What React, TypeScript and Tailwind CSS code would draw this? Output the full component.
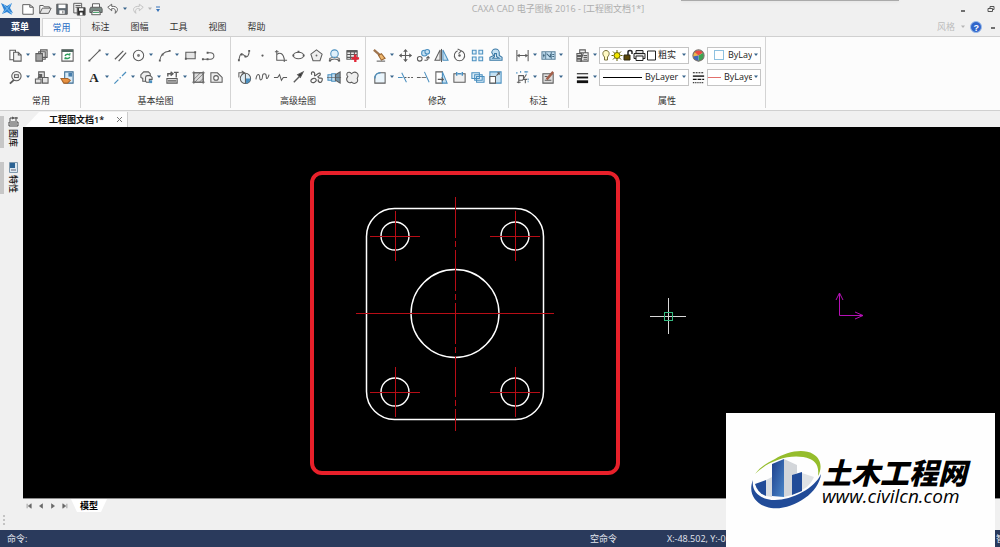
import { Fragment } from "react";
import type { ReactNode } from "react";

type Tool = { name: string; icon: ReactNode; menu?: boolean };

const DARK = "#5c5c5c";
const BLUE = "#4a8fbf";
const PALE = "#c4e0f2";

function Icon({ children, size = 15 }: { children: ReactNode; size?: number }) {
  return (
    <svg width={size} height={size} viewBox="0 0 16 16" fill="none" stroke={DARK} strokeWidth="1.1" aria-hidden="true">
      {children}
    </svg>
  );
}

function Caret({ light = false }: { light?: boolean }) {
  return (
    <svg width="8" height="4" viewBox="0 0 8 4" className="shrink-0" aria-hidden="true">
      <path d="M2 0.5h4L4 3z" fill={light ? "#b5b5b5" : "#39658c"} />
    </svg>
  );
}

const quickTools: Tool[] = [
  { name: "新建", icon: <path d="M2 3h8l4 3v8H2zM10 3v3h4" fill="#fff" /> },
  { name: "打开", icon: <><path d="M2 13V4h4l1 1.500h6V7" fill="#fff" /><path d="M2 13l3-6h10l-3 6z" fill="#e6e6e6" /></> },
  { name: "保存", icon: <><path d="M2 2.500h12v11.500H2z" fill="#606a72" /><path d="M4 3h8v4H4z" fill="#fff" stroke="none" /><path d="M5 9.500h6v4H5z" fill="#fff" stroke="none" /><path d="M9 10v3" /></> },
  { name: "另存为", icon: <><path d="M2 1.500h9v11H2zM4 4h6M4 6h5" fill="#eee" /><path d="M6 6.500h9V15H6z" fill="#333" /><path d="M8 7h5v3H8zM9 12h3v3H9z" fill="#fff" stroke="none" /></> },
  { name: "打印", icon: <><path d="M4 6V2h8v4" fill="#fff" /><path d="M2 6h12l1 2v4H1V8z" fill="#7b8b85" /><path d="M4 10h8l1 4.500H3z" fill="#fff" /><path d="M4.500 12h7" stroke="#4aa46d" /></> },
  { name: "撤销", icon: <path d="M6.500 2.500L2 6l4.500 4V7.500c3-.500 5 .500 4 5.500 4.500-4 3-8.500-4-8z" fill="#fff" />, menu: true },
  { name: "恢复", icon: <path d="M9.500 2.500L14 6l-4.500 4V7.500c-3-.500-5 .500-4 5.500-4.500-4-3-8.500 4-8z" stroke="#c2c2c2" />, menu: true },
];

const commonTop: Tool[] = [
  { name: "复制", menu: true, icon: <><path d="M2 2.500h6v10H2z" fill="#fff" /><path d="M6 4.500h5l3 3V14H6z" fill="#f1f1f1" /><path d="M11 4.500v3h3" /></> },
  { name: "粘贴", menu: true, icon: <><path d="M7 2h7v8H7zM5 4h7v8H5z" fill="#ddd" /><path d="M2 6h7v8H2z" fill="#a5a5a5" /></> },
  { name: "刷新", icon: <><path d="M2 2h12v12H2z" fill="#fff" /><path d="M2 3h12" strokeWidth="2.500" stroke="#4e6860" /><path d="M5.500 8.500c.5-2 4-2.500 5-.5M10.500 7v-1.500M5.500 10v2M10.500 9.500c-.5 2-4 2.500-5 .5" stroke="#2d9d5c" strokeWidth="1.600" /></> },
];
const commonBottom: Tool[] = [
  { name: "显示窗口", menu: true, icon: <><path d="M7 10L2 14.500" strokeWidth="2" /><circle cx="9" cy="6.500" r="5" fill="#f1f1f1" /><path d="M7 5h4v3H7z" /></> },
  { name: "块", menu: true, icon: <><path d="M5 2h6v6H5zM9 8h6v6H9zM1.500 9.500h6V14h-6z" fill="#e3e3e3" /><path d="M4 9l4-4M8 8V5H5" strokeWidth="1.500" /></> },
  { name: "特性匹配", icon: <><path d="M5 2h9v12H5z" fill="#d8eaf6" stroke="#386a91" /><path d="M9 3h4v4H9z" fill="#477eac" stroke="none" /><path d="M1 9h7l3 2-3 3H4z" fill="#e99241" stroke="#a7642b" /></> },
];

const basicTop: Tool[] = [
  { name: "直线", menu: true, icon: <><path d="M2.500 13.500L13.500 2.500" /><path d="M1.500 12.500h2v2h-2zM12.500 1.500h2v2h-2z" fill={DARK} stroke="none" /></> },
  { name: "平行线", icon: <path d="M2 12L11 3M6 14L14 5" strokeWidth="1.300" /> },
  { name: "圆", menu: true, icon: <><circle cx="8" cy="8" r="5.500" /><circle cx="8" cy="8" r="1.500" fill="#777" stroke="none" /></> },
  { name: "圆弧", menu: true, icon: <><path d="M3 13C4 7 7 4 13 3.500" /><path d="M2 12.500h2v2H2zM12.500 2h2v2h-2zM5 6h2v2H5z" fill={DARK} stroke="none" /></> },
  { name: "矩形", icon: <><path d="M3 4.500h10v7H3z" fill="#e5e5e5" /><path d="M2 10.500h2v2H2zM12 3.500h2v2h-2z" fill={DARK} stroke="none" /></> },
  { name: "多段线", icon: <><path d="M2 12h8c5 0 5-7 0-7H7" /><path d="M1 11h2v2H1zM6 11h2v2H6zM6 4h2v2H6z" fill={DARK} stroke="none" /></> },
];
const basicBottom: Tool[] = [
  { name: "文字", menu: true, icon: <text x="2.500" y="13" fontSize="14" fontWeight="700" fontFamily="Liberation Serif, serif" fill="#222" stroke="none">A</text> },
  { name: "中心线", menu: true, icon: <path d="M1.500 14.500L14.500 1.500" stroke={BLUE} strokeDasharray="6 2 1.500 2" strokeWidth="1.300" /> },
  { name: "等距线", menu: true, icon: <><path d="M5 2h5l2 2v3H8v5H4V9L2 8V5z" fill="#eee" /><path d="M7 12V8c0-1 1-2 2-2h3l2 2v2h-3v3H8z" fill="#f7f7f7" /><path d="M11 11h3v3h-3z" fill={BLUE} stroke="none" /></> },
  { name: "图库", menu: true, icon: <><path d="M2 9h11v5H2z" fill="#ddd" /><path d="M3 11.500h9M3 7V4h4M6 2l2.500 2L6 6M12 2v6M9.500 2.500h5" strokeWidth="1.400" /></> },
  { name: "剖面线", icon: <><path d="M3 3h10v10H3z" fill="#ddd" /><path d="M3 10l7-7M4 13l9-9M9 13l4-4M3 1v14M13 1v14M1 3h14M1 13h14" strokeWidth=".7" /></> },
  { name: "填充", icon: <><path d="M2 3h7l5 5v5H2z" fill="#eee" /><circle cx="7.500" cy="8.500" r="2.500" fill="#fff" /></> },
];

const advancedTop: Tool[] = [
  { name: "样条", icon: <><path d="M2 13c2-12 5-5 7-4s4-1 4-6" /><path d="M1 12h2v2H1zM12 2h2v2h-2zM4 6h2v2H4zM8 8h2v2H8z" fill={DARK} stroke="none" /></> },
  { name: "点", icon: <circle cx="8" cy="8" r="1.200" fill={DARK} stroke="none" /> },
  { name: "公式曲线", icon: <path d="M4 2v11h11M2 4h4M12 11v4M4 7c4-3 7-1 8 5" /> },
  { name: "椭圆", icon: <><ellipse cx="8" cy="8" rx="5.500" ry="3.500" /><path d="M7 3h2v2H7zM1.500 7h2v2h-2zM12.500 7h2v2h-2z" fill={DARK} stroke="none" /></> },
  { name: "正多边形", icon: <><path d="M8 2l6 4.500-2.300 7H4.300L2 6.500z" fill="#eee" /><circle cx="8" cy="8" r="1" fill="#666" stroke="none" /></> },
  { name: "局部放大图", icon: <><circle cx="8" cy="6" r="4" stroke={BLUE} fill="#e0f0fa" /><path d="M3 14v-3l3-1M13 14v-3l-3-1M3 14c2-3 8-3 10 0" /><path d="M2 12.500h2v2H2zM12 12.500h2v2h-2z" fill={DARK} stroke="none" /></> },
  { name: "表格", icon: <><path d="M2 3h11v9H2zM2 7h11M2 10h11M6 3v9M10 3v9" fill="#eee" /><path d="M2 3.500h11" strokeWidth="2.500" /><path d="M11 7v8M7 11h8" stroke="#e32636" strokeWidth="2.500" /></> },
];
const advancedBottom: Tool[] = [
  { name: "圆弧拟合", icon: <><circle cx="9" cy="9" r="5.500" fill="#e0edf5" /><path d="M9 9h5.500A5.500 5.500 0 019 14.500z" fill={BLUE} stroke="none" /><path d="M2 8V3h5M5 1l3 2-3 2M9 4v10" /></> },
  { name: "波浪线", icon: <path d="M1 10c1-7 4-6 4-2s3 3 3-1 4-4 4 0 2 2 3-2" /> },
  { name: "双折线", icon: <path d="M1 8h4l2-3 2 6 2-3h4" /> },
  { name: "箭头", icon: <><path d="M3 13l6-6" strokeWidth="1.500" /><path d="M7 5l6-3-3 6z" fill="#333" /></> },
  { name: "齿形", icon: <path d="M3 5c-2-4 4-4 3 0S11 1 12 4s-4 2-2 4 5-1 4 3-5 2-4-1M5 9c-5 1-3 6 1 4s0-5-1-4z" strokeWidth="1.300" /> },
  { name: "孔/轴", icon: <><path d="M1 5h4v6H1zM5 4h4v8H5z" fill={PALE} stroke={BLUE} /><path d="M9 5l5-3v12l-5-3z" fill="#7494a8" /><path d="M0 8h15" strokeWidth=".7" /></> },
  { name: "云线", icon: <path d="M7 4c-3-4-7 0-4 3-3 3 0 8 4 6 3 3 8 0 6-4 3-5-2-9-6-5z" fill="#eee" /> },
];

const modifyTop: Tool[] = [
  { name: "删除", menu: true, icon: <><path d="M2 2l8 7" strokeWidth="2.500" stroke="#9e744e" /><path d="M7 8l3-2 4 5-4 2z" fill="#efb76e" stroke="#99642f" /><path d="M5 14h9" /></> },
  { name: "平移", icon: <><path d="M8 2v12M2 8h12" strokeWidth="1.200" /><path d="M8 1l2.500 3h-5zM8 15l2.500-3h-5zM1 8l3-2.500v5zM15 8l-3-2.500v5z" fill={DARK} stroke="none" /></> },
  { name: "平移复制", icon: <><circle cx="9" cy="5.500" r="3" stroke={BLUE} fill={PALE} /><circle cx="12" cy="4" r="2.500" stroke={BLUE} fill={PALE} /><circle cx="4" cy="11.500" r="2.500" /><path d="M9 13h2c2 0 2-1 2-3M11 11l2-2 1.500 2" /></> },
  { name: "镜像", icon: <><path d="M6.500 2v11H1z" fill="#eee" /><path d="M9.500 2v11H15z" fill={PALE} stroke={BLUE} /><path d="M8 1v14" /></> },
  { name: "旋转", icon: <><path d="M10 3a5.500 5.500 0 11-4 0M6 1l4 2-3 3" /><circle cx="8" cy="8" r="1.300" fill={DARK} stroke="none" /></> },
  { name: "阵列", icon: <path d="M2.500 2.500h4v4h-4zM9.500 2.500h4v4h-4zM2.500 9.500h4v4h-4zM9.500 9.500h4v4h-4z" fill="#dceef9" stroke={BLUE} /> },
  { name: "偏移", icon: <><path d="M2 13h13v-3l-3-2V5a4 4 0 00-8 0l2 3-4 2z" fill={PALE} stroke="#3b79a5" /><path d="M5 11h7l-3-2V6H7v3z" fill="#fff" stroke="#3b79a5" /></> },
];
const modifyBottom: Tool[] = [
  { name: "圆角", menu: true, icon: <><path d="M3 14V9c0-4 3-6 6-6h5v11z" fill="#eaf5fc" /><path d="M3 9c0-4 3-6 6-6" stroke={BLUE} strokeWidth="1.500" /></> },
  { name: "裁剪", icon: <><path d="M4 3l5 10M0 8h5" stroke={BLUE} /><path d="M7 8h9" strokeDasharray="2 1.500" /></> },
  { name: "延伸", icon: <><path d="M1 8h4" /><path d="M6 8h5" stroke="#777" /><path d="M9 2l5 11" stroke={BLUE} /></> },
  { name: "拉伸", icon: <><path d="M2 2h7v12H2z" fill="#fff" /><path d="M9 2l5 12H9z" fill={PALE} stroke={BLUE} /><path d="M4 10h6M8 8l2 2-2 2" /></> },
  { name: "打断", icon: <><path d="M5 4H2v9h12V4h-3" fill="#f0f0f0" /><path d="M5 2v4M11 2v4M6 4h4" stroke={BLUE} strokeWidth="1.500" /></> },
  { name: "分解", icon: <path d="M2 3h8v6H2zM5 5h8v6H5zM7 7h8v6H7z" fill="#dceef9" stroke={BLUE} /> },
  { name: "缩放", icon: <><path d="M2 2h12v12H2z" fill={PALE} stroke={BLUE} /><path d="M2 7h6v7H2z" fill="#fff" /><path d="M9 6l3-3M10 3h2v2" /></> },
];

const markTop: Tool[] = [
  { name: "尺寸标注", menu: true, icon: <><path d="M2 2v12M14 2v12M3 8h10" /><path d="M2 8l3-2v4zM14 8l-3-2v4z" fill={DARK} stroke="none" /></> },
  { name: "形位公差", menu: true, icon: <><path d="M1 4h14v8H1zM5 4v8M11 4v8" fill={PALE} stroke="#5c8199" /><path d="M2 8h2M3 6v4M6 6l4 4M10 6v4M12 7h2M12 9h2" stroke="#42677f" /></> },
];
const markBottom: Tool[] = [
  { name: "坐标标注", menu: true, icon: <><path d="M4 14V6h5v4h4M2 13h4M4 11h4l4-6M11 10v4" /><path d="M2 2v3M6 1v3M10 2h4M12 1v4M14 9v4" stroke={BLUE} strokeDasharray="2 1" /></> },
  { name: "标注编辑", menu: true, icon: <><path d="M2 4h11v10H2z" fill="#ddd" /><path d="M4 11h7M4 7h3" /><path d="M6 10l7-8" stroke="#a35f4a" strokeWidth="2.500" /></> },
];

const layerTool: Tool = { name: "图层", menu: true, icon: <><path d="M5 2h6v3H5zM9 5h5v9H6l2-6z" fill="#eee" /><path d="M2 6h5v2H2zM2 9h5v2H2zM2 12h5v2H2zM9 8h4M9 10h4M9 12h4" /></> };
const widthTool: Tool = { name: "线宽", menu: true, icon: <><path d="M2 4h12" stroke="#111" /><path d="M2 8h12" strokeWidth="2" stroke="#111" /><path d="M2 12.500h12" strokeWidth="3" stroke="#111" /></> };
const colorTool: Tool = { name: "颜色", icon: <g stroke="none"><path d="M8 8L3 5a6 6 0 0110 0z" fill="#e84d45" /><path d="M8 8l5-3a6 6 0 01-5 9z" fill="#3da451" /><path d="M8 8v6A6 6 0 013 5z" fill="#3f68be" /><path d="M8 8L2 9a6 6 0 011.500-5z" fill="#edb44b" /><circle cx="8" cy="8" r="6" stroke="#756c66" fill="none" /></g> };
const lineTool: Tool = { name: "线型", icon: <><path d="M2 3h12" strokeDasharray="2 1" stroke="#111" /><path d="M2 6.500h12" stroke="#111" strokeWidth="1.500" /><path d="M2 10h12" strokeDasharray="4 1" stroke="#111" strokeWidth="1.500" /><path d="M2 13.500h12" strokeDasharray="1 1" stroke="#111" strokeWidth="1.500" /></> };

function ToolButton({ tool }: { tool: Tool }) {
  return (
    <button type="button" aria-label={tool.name} className="flex h-[18px] shrink-0 items-center">
      <span className="flex w-[18px] justify-center">
        <Icon>{tool.icon}</Icon>
      </span>
      {tool.menu && <Caret />}
    </button>
  );
}

function Panel({ label, children }: { label: string; children: ReactNode }) {
  return (
    <section className="flex flex-col border-r border-[#d4d4d4] pt-[9px] pr-[4px] pl-[4px]">
      <div className="flex flex-col gap-1">{children}</div>
      <h2 className="mt-2 text-center leading-[14px]">{label}</h2>
    </section>
  );
}

function ToolRow({ tools }: { tools: Tool[] }) {
  return (
    <div className="flex h-[18px] items-center">
      {tools.map((tool) => (
        <ToolButton key={tool.name} tool={tool} />
      ))}
    </div>
  );
}

function Combo({ label, value, wide = false, children }: { label: string; value: string; wide?: boolean; children: ReactNode }) {
  return (
    <div className={`flex h-[17px] items-center border border-[#c4c4c4] bg-white ${wide ? "w-[90px]" : "w-[54px]"}`}>
      {children}
      <select aria-label={label} className="h-full min-w-0 flex-1 appearance-none overflow-hidden bg-transparent text-[9px] text-[#222] outline-none">
        <option>{value}</option>
      </select>
      <Caret />
    </div>
  );
}

const ribbonTabs = ["常用", "标注", "图幅", "工具", "视图", "帮助"];

function TitleBar() {
  return (
    <header className="relative flex h-[18px] items-center">
      <svg width="19" height="16" viewBox="0 0 19 16" className="shrink-0" aria-hidden="true">
        <path d="M1 2l6 3 5-3-2 5 3 5-3-1 2 3-5-3-5 2 2-4z" fill="#2f83d5" />
        <path d="M4 4l8 9M11 3L3 12" stroke="#74bbf0" strokeWidth="1" />
      </svg>
      {quickTools.map((tool) => (
        <button key={tool.name} type="button" aria-label={tool.name} className="flex shrink-0 items-center">
          <span className="flex w-[17px] justify-center">
            <Icon size={14}>{tool.icon}</Icon>
          </span>
          {tool.menu && <Caret light={tool.name === "恢复"} />}
        </button>
      ))}
      <button type="button" aria-label="自定义快速启动工具栏" className="flex w-[8px] justify-center">
        <svg width="6" height="7" viewBox="0 0 6 7" aria-hidden="true">
          <path d="M1 1h4" stroke="#3673b9" />
          <path d="M1 3h4L3 6z" fill="#3673b9" />
        </svg>
      </button>
      <h1 className="flex-1 text-center text-[#adadad]">CAXA CAD 电子图板 2016 - [工程图文档1*]</h1>
      <div className="flex w-[46px] justify-between">
        <button type="button" aria-label="最小化" className="flex w-[18px] justify-center">
          <svg width="8" height="8" viewBox="0 0 8 8"><path d="M2 6h4" stroke="#444" strokeWidth="1.500" /></svg>
        </button>
        <button type="button" aria-label="还原" className="flex w-[18px] justify-center">
          <svg width="8" height="8" viewBox="0 0 8 8" fill="none" stroke="#555"><path d="M3 3V1.500h4v3H5.500M1 3.500h4.500v3H1z" /></svg>
        </button>
      </div>
      <div className="absolute top-0 right-[101px] h-px w-[218px] bg-[#aaa] shadow" />
    </header>
  );
}

function Ribbon() {
  return (
    <>
      <nav className="flex h-[18px] items-end">
        <button type="button" className="h-[18px] w-[40px] bg-[#2a3a5c] font-semibold text-white">菜单</button>
        <div className="ml-[2px] flex">
          {ribbonTabs.map((tab, i) => (
            <button
              key={tab}
              type="button"
              className={i === 0 ? "h-[18px] w-[39px] border-x border-t border-[#d4d4d4] bg-[#fcfcfc] text-[#2469c4]" : "h-[18px] w-[39px]"}
            >
              {tab}
            </button>
          ))}
        </div>
        <div className="ml-auto flex h-[18px] items-center">
          <button type="button" className="flex items-center gap-1 text-[#bcbcbc]">风格<Caret light /></button>
          <button type="button" aria-label="帮助主题" className="flex w-[18px] justify-center">
            <svg width="12" height="12" viewBox="0 0 12 12">
              <circle cx="6" cy="6" r="5.500" fill="#2f65ca" stroke="#9cbbe9" />
              <text x="3.500" y="9.500" fontSize="9" fontWeight="700" fontFamily="Liberation Sans, sans-serif" fill="#fff">?</text>
            </svg>
          </button>
          <button type="button" aria-label="最小化文档" className="flex w-[15px] justify-center">
            <svg width="8" height="8" viewBox="0 0 8 8"><path d="M2 5h4" stroke="#444" strokeWidth="1.500" /></svg>
          </button>
        </div>
      </nav>
      <div className="flex h-[75px] border-y border-[#d0d0d0] bg-[#fcfcfc] pb-[2px]">
        <div className="flex w-[81px] flex-col *:flex-1 *:pl-[6px]">
          <Panel label="常用"><ToolRow tools={commonTop} /><ToolRow tools={commonBottom} /></Panel>
        </div>
        <div className="flex w-[150px] flex-col *:flex-1">
          <Panel label="基本绘图"><ToolRow tools={basicTop} /><ToolRow tools={basicBottom} /></Panel>
        </div>
        <div className="flex w-[135px] flex-col *:flex-1">
          <Panel label="高级绘图"><ToolRow tools={advancedTop} /><ToolRow tools={advancedBottom} /></Panel>
        </div>
        <div className="flex w-[143px] flex-col *:flex-1">
          <Panel label="修改"><ToolRow tools={modifyTop} /><ToolRow tools={modifyBottom} /></Panel>
        </div>
        <div className="flex w-[60px] flex-col *:flex-1">
          <Panel label="标注"><ToolRow tools={markTop} /><ToolRow tools={markBottom} /></Panel>
        </div>
        <Panel label="属性">
          <div className="flex h-[18px] items-center">
            <ToolButton tool={layerTool} />
            <Combo label="当前图层" value="粗实" wide>
              <svg width="58" height="13" viewBox="0 0 58 13" fill="none" stroke="#222" className="shrink-0" aria-hidden="true">
                <path d="M4.500 8C1.500 5 3 1.500 6 1.500s4.500 3.500 1.500 6.500v3h-3z" fill="#fffac4" stroke="#77713c" />
                <circle cx="17" cy="6.500" r="3" fill="#f2e600" stroke="#625e00" />
                <path d="M17 1v2M17 10v2M11.500 6.500h2M20.500 6.500h2M13 2.500l1.500 1.500M19.500 9l1.500 1.500M21 2.500L19.500 4M14.500 9L13 10.500" stroke="#625e00" />
                <path d="M24 6h6v5h-6z" fill="#5c4908" stroke="#2f2810" />
                <path d="M28 6V3c0-2 4-2 4 0v2" strokeWidth="1.500" />
                <path d="M36 4V1.500h7V4M34 4.500h11v5H34z" fill="#ddd" />
                <path d="M36 7h7v4.500h-7z" fill="#fff" />
                <path d="M47.500 2h8v9h-8z" fill="#fff" />
              </svg>
            </Combo>
            <ToolButton tool={colorTool} />
            <Combo label="当前颜色" value="ByLayer">
              <span className="mr-1 ml-[6px] size-[10px] shrink-0 border border-[#8fc1e0]" />
            </Combo>
          </div>
          <div className="flex h-[18px] items-center">
            <ToolButton tool={widthTool} />
            <Combo label="当前线宽" value="ByLayer" wide>
              <span className="mr-[3px] ml-[3px] h-px w-[39px] shrink-0 bg-black" />
            </Combo>
            <ToolButton tool={lineTool} />
            <Combo label="当前线型" value="ByLayer">
              <span className="mr-[3px] h-px w-[13px] shrink-0 bg-[#e2706c]" />
            </Combo>
          </div>
        </Panel>
      </div>
    </>
  );
}

// hole centres of the flange plate
const holes = [[395, 236], [515, 236], [395, 392], [515, 392]];

function Drawing() {
  return (
    <svg viewBox="23 127 977 370" preserveAspectRatio="xMinYMin meet" className="min-h-0 min-w-0 flex-1" fill="none" role="img" aria-label="法兰板">
      <rect x="312" y="173" width="306" height="300" rx="10" stroke="#e8202a" strokeWidth="4" />
      <rect x="366.500" y="208.500" width="177" height="211" rx="28" stroke="#fff" strokeWidth="1.500" />
      <circle cx="455" cy="313.500" r="44" stroke="#fff" strokeWidth="1.400" />
      {holes.map(([x, y]) => (
        <Fragment key={`${x}-${y}`}>
          <circle cx={x} cy={y} r="14" stroke="#fff" strokeWidth="1.400" />
          <path d={`M${x - 25} ${y + 0.5}h50M${x + 0.5} ${y - 25}v50`} stroke="#b80d16" />
        </Fragment>
      ))}
      <path d="M356 313.500h198" stroke="#b80d16" />
      <path d="M455.500 197v234" stroke="#b80d16" strokeDasharray="41 3 6 3" />
      <path d="M650 316.500h36M668.500 298v36" stroke="#d8d8d8" />
      <rect x="664.500" y="312.500" width="8" height="8" stroke="#35ba80" />
      <path d="M839.500 293v22.500H863M836 300l3.500-7 3.500 7M855 312l8 3.500-8 3.500" stroke="#b510b5" />
    </svg>
  );
}

function SideDock() {
  return (
    <aside className="flex w-[23px] flex-col gap-[14px] pt-[5px] font-medium text-[#111]">
      <button type="button" className="flex h-[32px] items-start border-l-4 border-[#c7c7c7] pl-[4px]">
        <span className="flex w-[11px] flex-col items-center gap-[2px]">
          <svg width="11" height="11" viewBox="0 0 11 11" fill="none" stroke="#444" aria-hidden="true"><path d="M1 6h9v4H1zM2 8h7M2 5V2h3M4 1l2 1-2 1M8 1v4M6 2h4" /></svg>
          <span className="leading-[11px] [text-orientation:sideways] [writing-mode:vertical-rl]">图库</span>
        </span>
      </button>
      <button type="button" className="flex h-[32px] items-start border-l-4 border-[#c7c7c7] pl-[4px]">
        <span className="flex w-[11px] flex-col items-center gap-[2px]">
          <svg width="11" height="11" viewBox="0 0 11 11" aria-hidden="true"><path d="M1.500.5h8v10h-8z" fill="#dce8f1" stroke="#7f99ad" /><path d="M2 1h5v5H2z" fill="#2b6394" /><path d="M3 8h5" stroke="#667" /></svg>
          <span className="leading-[11px] [text-orientation:sideways] [writing-mode:vertical-rl]">特性</span>
        </span>
      </button>
    </aside>
  );
}

const sheetButtons = [
  { name: "第一个", d: "M1.500 1v6M7 1v6L3 4z" },
  { name: "上一个", d: "M6 1v6L2 4z" },
  { name: "下一个", d: "M2 1v6l4-3z" },
  { name: "最后一个", d: "M6.500 1v6M1 1v6l4-3z" },
];

function Workspace() {
  return (
    <main className="flex min-h-0 flex-1">
      <SideDock />
      <div className="flex min-w-0 flex-1 flex-col">
        <div className="flex h-[16px] items-end">
          <div className="ml-[2px] flex h-[15px] w-[103px] items-center justify-between border-r border-[#ccc] bg-[#fdfdfd] pr-1 pl-6 [clip-path:polygon(14px_0,100%_0,100%_100%,0_100%)]">
            <span className="font-semibold text-[#111]">工程图文档1*</span>
            <button type="button" aria-label="关闭文档">
              <svg width="7" height="7" viewBox="0 0 7 7" stroke="#777"><path d="M1 1l5 5M6 1L1 6" /></svg>
            </button>
          </div>
        </div>
        <div className="flex min-h-0 flex-1 border-b border-[#8c8c8c] bg-black">
          <Drawing />
        </div>
        <div className="flex h-[13px] items-center">
          {sheetButtons.map((b) => (
            <button key={b.name} type="button" aria-label={b.name} className="flex w-[12px] justify-center">
              <svg width="6" height="6" viewBox="0 0 8 8" fill="#666" stroke="#666" strokeWidth=".8"><path d={b.d} /></svg>
            </button>
          ))}
          <button type="button" className="h-[13px] w-[36px] bg-white font-bold text-black [clip-path:polygon(0_0,100%_0,calc(100%-6px)_100%,6px_100%)]">模型</button>
        </div>
      </div>
    </main>
  );
}

function Watermark() {
  return (
    <div className="absolute right-[5px] bottom-0 flex h-[134px] w-[269px] items-start bg-[#fefefe] pt-[36px] pl-[24px]">
      <svg width="72" height="62" viewBox="750 449 72 62" className="shrink-0" aria-hidden="true">
        <defs>
          <linearGradient id="tower" x1="0" y1="0" x2="1" y2="1">
            <stop offset="0" stopColor="#1d3f8c" />
            <stop offset="1" stopColor="#4a86c8" />
          </linearGradient>
        </defs>
        <path d="M755 474c7-9 13-11 20-15 11-7 28-11 38-5 9 5 9 15 5 22 1-8-1-14-8-17-18-7-42 2-55 15z" fill="#95bd2c" />
        <path d="M753 480c-6 14 4 26 18 28 20 3 48-14 50-34-6 14-29 26-46 26-14 0-24-8-22-20z" fill="#214b98" />
        <path d="M755 484l11-4v16c-6-2-9-6-11-12z" fill="#214b98" />
        <path d="M766 480l6-3v20l-6-1z" fill="#d9dde2" />
        <path d="M772 464l12-5v38l-12-1z" fill="url(#tower)" />
        <path d="M784 459l13 6v8l-5 3v19l-8 2z" fill="#d3d6da" />
        <path d="M792 475l10-3v19l-10 4z" fill="#214b98" />
        <path d="M802 473l12 4c-2 5-6 10-12 13z" fill="#dfe2e5" />
      </svg>
      <div className="flex flex-col whitespace-nowrap text-black italic">
        <span className="pt-[10px] text-[29px] leading-[28px] font-black">土木工程网</span>
        <span className="text-[19px] leading-[18px] font-medium">www.civilcn.com</span>
      </div>
    </div>
  );
}

export default function App() {
  return (
    <div className="relative flex h-screen flex-col overflow-hidden bg-[#f0f0f0] font-['Open_Sans','Noto_Sans_CJK_SC',sans-serif] text-[9px] leading-[12px] text-[#333]">
      <TitleBar />
      <Ribbon />
      <Workspace />
      <div className="flex h-[18px] items-start pt-[3px] pl-[3px]">
        <div className="h-[10px] border-l-2 border-dotted border-[#c4c4c4]" />
      </div>
      <footer className="flex h-[17px] items-center bg-[#2a3a5c] pl-[7px] text-[#e2e6ee]">
        <span className="w-[583px]">命令:</span>
        <span className="w-[77px]">空命令</span>
        <span>X:-48.502, Y:-0.315</span>
        <span className="ml-auto w-[4px] overflow-hidden whitespace-nowrap">智能</span>
      </footer>
      <Watermark />
    </div>
  );
}
